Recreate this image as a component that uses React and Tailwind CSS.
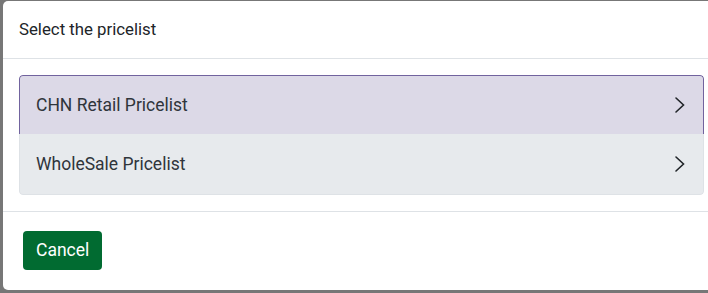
const pricelists = [
  { name: "CHN Retail Pricelist", selected: true },
  { name: "WholeSale Pricelist", selected: false },
]

function Chevron() {
  return (
    <svg width="12" height="18" viewBox="0 0 12 18" fill="none" className="shrink-0">
      <path d="M2 2 L9.5 9 L2 16" stroke="#212529" strokeWidth="1.6" strokeLinecap="round" />
    </svg>
  )
}

export default function App() {
  return (
    <div
      className="w-[708px] h-[293px] overflow-hidden bg-[#777777] pt-px pl-[3px]"
      style={{ fontFamily: "Roboto, 'Noto Sans', sans-serif" }}
    >
      <div className="w-[717px] h-[289px] bg-white rounded-[5px] flex flex-col">
        <div className="h-[58px] px-4 flex items-center border-b border-[#dee2e6]">
          <span className="text-[16.8px] text-[#212529]">Select the pricelist</span>
        </div>

        <div className="p-4">
          <div className="flex flex-col rounded-[4px] overflow-hidden">
            {pricelists.map((p) => (
              <div
                key={p.name}
                className={
                  p.selected
                    ? "h-[59px] pl-4 pr-[17px] flex items-center justify-between bg-[#dcd9e7] border border-b-0 border-[#71639e] rounded-t-[4px]"
                    : "h-[61px] pl-4 pr-[17px] flex items-center justify-between bg-[#e7eaed] border border-t-0 border-[#dee2e6] rounded-b-[4px]"
                }
              >
                <span className="text-[17.5px] text-[#2f353b]">{p.name}</span>
                <Chevron />
              </div>
            ))}
          </div>
        </div>

        <div className="border-t border-[#dee2e6] px-5 pt-[19px]">
          <button className="h-[39px] px-[13px] rounded-[4px] bg-[#016b31] text-white text-[17.5px]">
            Cancel
          </button>
        </div>
      </div>
    </div>
  )
}
